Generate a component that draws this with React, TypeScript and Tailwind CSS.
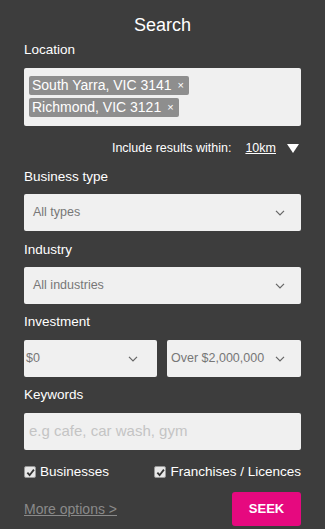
import React from "react";

const Chevron = () => (
  <svg width="10" height="6" viewBox="0 0 10 6" fill="none">
    <path d="M1 0.8 L5 5 L9 0.8" stroke="#666" strokeWidth="1.2" />
  </svg>
);

const Check = () => (
  <span className="inline-flex w-[12px] h-[12px] bg-[#e8e8e8] rounded-[2px] items-center justify-center border border-[#999]">
    <svg width="9" height="9" viewBox="0 0 10 10">
      <path d="M1.5 5.2 L4 8 L8.8 1.8" stroke="#333" strokeWidth="2" fill="none" />
    </svg>
  </span>
);

const Tag = ({ text }: { text: string }) => (
  <span className="inline-flex items-center bg-[#8e8e8e] text-white text-[14px] leading-[19px] h-[19px] px-[3px] rounded-[2px] self-start">
    {text}
    <span className="ml-[6px] text-[11px] mr-[2px]">×</span>
  </span>
);

const Select = ({ text, className = "" }: { text: string; className?: string }) => (
  <div className={`h-[37px] bg-[#f0f0f0] rounded-[2px] flex items-center justify-between ${className}`}>
    <span className="text-[12.5px] text-[#777] whitespace-nowrap">{text}</span>
    <Chevron />
  </div>
);

export default function App() {
  return (
    <div
      className="w-[325px] h-[529px] bg-[#3d3d3d] text-white px-[24px] overflow-hidden"
      style={{ fontFamily: '"Liberation Sans", Arial, sans-serif' }}
    >
      <div className="text-center text-[18px] leading-[22px] pt-[14px]">Search</div>
      <div className="text-[13.5px] leading-[16px] mt-[6px]">Location</div>
      <div className="mt-[10px] h-[58px] bg-[#f0f0f0] rounded-[2px] flex flex-col gap-[3px] pt-[8px] pl-[5px]">
        <Tag text="South Yarra, VIC 3141" />
        <Tag text="Richmond, VIC 3121" />
      </div>
      <div className="flex items-center justify-end text-[12.5px] leading-[16px] mt-[14px] pr-[2px]">
        <span>Include results within:</span>
        <span className="ml-[14px] underline">10km</span>
        <svg className="ml-[11px]" width="12" height="9" viewBox="0 0 12 9">
          <path d="M0 0 H12 L6 9 Z" fill="#fff" />
        </svg>
      </div>
      <div className="text-[13.5px] leading-[16px] mt-[13px]">Business type</div>
      <Select text="All types" className="mt-[9px] pl-[9px] pr-[16px]" />
      <div className="text-[13.5px] leading-[16px] mt-[11px]">Industry</div>
      <Select text="All industries" className="mt-[9px] pl-[9px] pr-[16px]" />
      <div className="text-[13.5px] leading-[16px] mt-[10px]">Investment</div>
      <div className="flex gap-[10px] mt-[10px]">
        <Select text="$0" className="w-[133px] pl-[2px] pr-[19px]" />
        <Select text="Over $2,000,000" className="flex-1 pl-[4px] pr-[16px]" />
      </div>
      <div className="text-[13.5px] leading-[16px] mt-[10px]">Keywords</div>
      <div className="mt-[10px] h-[37px] bg-[#f0f0f0] rounded-[2px] flex items-center pl-[5px]">
        <span className="text-[15px] text-[#c4c4c4]">e.g cafe, car wash, gym</span>
      </div>
      <div className="flex items-center justify-between mt-[14px] text-[13.5px] leading-[16px]">
        <div className="flex items-center gap-[4px]">
          <Check />
          <span>Businesses</span>
        </div>
        <div className="flex items-center gap-[4px]">
          <Check />
          <span>Franchises / Licences</span>
        </div>
      </div>
      <div className="flex items-center justify-between mt-[12px]">
        <span className="text-[14px] text-[#8a8a8a] underline">More options &gt;</span>
        <div className="w-[69px] h-[34px] bg-[#e6097f] rounded-[3px] flex items-center justify-center text-[13px] font-bold">
          SEEK
        </div>
      </div>
    </div>
  );
}
